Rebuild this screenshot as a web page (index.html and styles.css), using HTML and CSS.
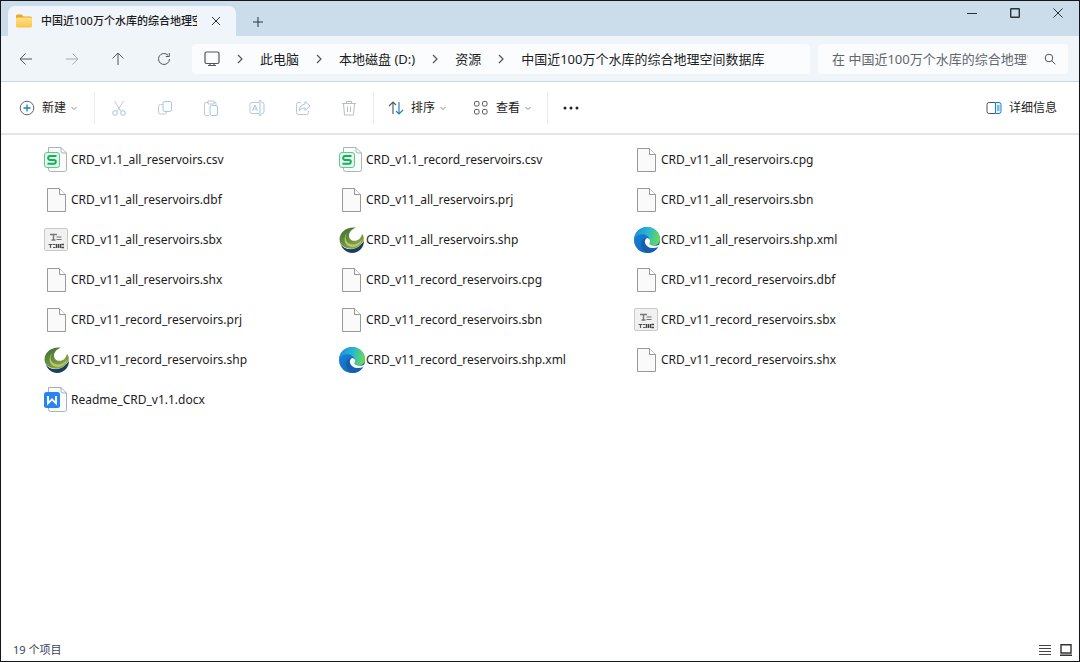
FILE: index.html
```html
<!DOCTYPE html>
<html lang="zh-CN">
<head>
<meta charset="utf-8">
<title>中国近100万个水库的综合地理空间数据库</title>
<link rel="stylesheet" href="styles.css">
</head>
<body>
<svg class="defs" aria-hidden="true">
  <defs>
    <linearGradient id="folder" x2="0" y2="1"><stop offset="0" stop-color="#ffe28a"/><stop offset="1" stop-color="#f8c544"/></linearGradient>
    <linearGradient id="globe-green" x2=".6" y2="1"><stop offset="0" stop-color="#3f6b35"/><stop offset=".5" stop-color="#5f8a3c"/><stop offset="1" stop-color="#8fa848"/></linearGradient>
    <linearGradient id="edge-top" x1="0" y1=".3" x2="1" y2=".5"><stop offset="0" stop-color="#1b8fdc"/><stop offset=".5" stop-color="#2bb5cf"/><stop offset="1" stop-color="#68dc55"/></linearGradient>
    <linearGradient id="edge-low" x2="1" y2="1"><stop offset="0" stop-color="#1787dc"/><stop offset="1" stop-color="#1160b4"/></linearGradient>
    <symbol id="i-file" viewBox="0 0 26 26"><path d="M3.500 1.500h12l6 6v17h-18z" fill="#fafafa" stroke="#999"/><path d="M15.500 1.500v6h6" fill="#fff" stroke="#999"/></symbol>
    <symbol id="i-csv" viewBox="0 0 26 26"><path d="M4.500.5H17l5.500 5.500v16.500a2 2 0 0 1-2 2h-14a2 2 0 0 1-2-2z" fill="#fafbfb" stroke="#adb5b4"/><path d="M17 .5V4a2 2 0 0 0 2 2h3.500" fill="none" stroke="#adb5b4"/><rect x=".5" y="5.500" width="15" height="15" rx="2.500" fill="#e5f8ec" stroke="#5bcb8a"/><path d="M12.500 9H6a1.800 1.800 0 0 0-1.800 1.800v.2A1.800 1.800 0 0 0 6 12.900h4a1.800 1.800 0 0 1 1.800 1.800v.3a1.800 1.800 0 0 1-1.800 1.800H3.500" fill="none" stroke="#18ad5b" stroke-width="2"/></symbol>
    <symbol id="i-doc" viewBox="0 0 26 26"><path d="M4.500.5H17l5.500 5.500v16.500a2 2 0 0 1-2 2h-14a2 2 0 0 1-2-2z" fill="#fafbfc" stroke="#a9afb8"/><path d="M17 .5V4a2 2 0 0 0 2 2h3.500" fill="none" stroke="#a9afb8"/><rect y="5" width="16" height="16" rx="2.500" fill="#2785f0"/><path d="M4 9v7.300l4-4 4 4V9" fill="none" stroke="#fff" stroke-width="1.900"/></symbol>
    <symbol id="i-sbx" viewBox="0 0 26 26"><rect x=".5" y="1.500" width="23" height="22" rx="1.500" fill="#f1f1f1" stroke="#cacaca"/><path d="M6 7.500h7M9.500 7.500V13M7.500 13h4" fill="none" stroke="#777" stroke-width="1.400"/><path d="M12.500 10h5M12.500 12.500h5" stroke="#777"/><path d="M4.500 17.500h4M6.500 17v4M9 17.500h2.500M9 20.500h2.500" stroke="#555" stroke-width="1.200"/><path d="M12.500 17v4M14.500 17v4M16.500 17v4M17.500 17.500h2.500M17.500 20.500h2.500" stroke="#444" stroke-width="1.400"/></symbol>
    <symbol id="i-shp" viewBox="0 0 26 26"><path d="M1.500 17C6 24 18 24 25 13c.5 7-5 13-12 13-5 0-9.500-3.500-11.500-9z" fill="#173f61"/><path d="M1.500 16.500C6 23.500 18 24 24.500 14" fill="none" stroke="#dfe9e6" stroke-width="1"/><path d="M17 .8C8-.5.500 5 .5 12.500.5 18 6 21.800 12.500 21.800 18 21.800 23 18 24.800 12c.1-2-.6-3.600-1.800-5C22 11 19.500 13.800 15.500 13.800 8 13.800 8 3.500 17 .8z" fill="url(#globe-green)"/><path d="M9 5C5.500 9 6 14 10 16.500c4.500 2.500 10.500.5 13.500-4.500-2 7-9 9.500-14 7C4.500 16.500 4.500 9 9 5z" fill="#b9c76c"/></symbol>
    <symbol id="i-edge" viewBox="0 0 26 26"><circle cx="13" cy="13" r="13" fill="url(#edge-low)"/><path d="M0 12C1 5 6 0 13 0c8 0 13 6 13 12 0 4.500-3.500 6.800-7 6.800-2.500 0-4.500-.8-4-2.300.8-1 1.200-2 .8-4C14 6 4 5 0 12z" fill="url(#edge-top)"/><path d="M10.500 11C5 14 6 25 14.500 26c4-.3 7.500-2.500 9.500-5.500-5 2.200-11 .5-12.500-4.500-.5-2 0-3.500 1-5z" fill="#1560ae"/><path d="M13.200 11c-2.800 1.300-3 4.700-.9 7.200 2.700 3.200 8 3.800 12.200 1.600l1.500-2.600c-2.800 1.800-6 1.800-8.500 1-2.200-.7-2.700-1.600-1.700-2.800.8-1.600.3-4-2.600-4.400z" fill="#fff"/></symbol>
    <symbol id="i-next" viewBox="0 0 8 10"><path d="m2 1 4 4-4 4" fill="none" stroke="#555" stroke-width="1.200"/></symbol>
    <symbol id="i-down" viewBox="0 0 8 8"><path d="m1.500 3 2.500 2.500L6.500 3" fill="none" stroke="#888"/></symbol>
  </defs>
</svg>
<div class="window">
  <header class="titlebar">
    <div class="tab">
      <svg class="icon16" viewBox="0 0 16 16"><g stroke="none"><path d="M0 3a1.500 1.500 0 0 1 1.500-1.500h4L7.500 3.500h7A1.500 1.500 0 0 1 16 5v6H0z" fill="#e9a820"/><rect y="4.500" width="16" height="10" rx="1.500" fill="url(#folder)"/></g></svg>
      <span class="tab-title">中国近100万个水库的综合地理空间数据库</span>
      <button class="tab-close" aria-label="关闭标签页"><svg class="icon10" viewBox="0 0 10 10"><path d="m1 1 8 8M9 1 1 9"/></svg></button>
    </div>
    <button class="tab-add" aria-label="新建标签页"><svg class="icon10" viewBox="0 0 10 10"><path d="M5 0v10M0 5h10"/></svg></button>
    <div class="window-controls">
      <button aria-label="最小化"><svg class="icon10" viewBox="0 0 10 10"><path d="M0 5.500h10"/></svg></button>
      <button aria-label="最大化"><svg class="icon10" viewBox="0 0 10 10"><rect x=".7" y=".7" width="8.600" height="8.600" rx=".5" stroke-width="1.400"/></svg></button>
      <button aria-label="关闭"><svg class="icon10" viewBox="0 0 10 10"><path d="m.5.5 9 9M9.500.5l-9 9"/></svg></button>
    </div>
  </header>

  <nav class="navbar" aria-label="导航">
    <div class="nav-buttons">
      <button aria-label="后退"><svg class="icon14" viewBox="0 0 14 14"><path d="M13 7H1.500M6.500 1.500 1 7l5.500 5.500"/></svg></button>
      <button aria-label="前进" disabled><svg class="icon14" viewBox="0 0 14 14"><path d="M1 7h11.500M7.500 1.500 13 7l-5.500 5.500"/></svg></button>
      <button aria-label="向上"><svg class="icon14" viewBox="0 0 14 14"><path d="M7 13V1.500M1.500 6.500 7 1l5.500 5.500"/></svg></button>
      <button aria-label="刷新"><svg class="icon14" viewBox="0 0 14 14"><path d="M12.500 7A5.500 5.500 0 1 1 11 3.200M12.300 1v3.500H8.800"/></svg></button>
    </div>
    <div class="address">
      <svg class="icon16 monitor" viewBox="0 0 16 16"><rect x="1" y="1" width="14" height="11.500" rx="1.500"/><path d="M4 14.500h8M6 12.500v2M10 12.500v2"/></svg>
      <svg class="next"><use href="#i-next"/></svg>
      <a href="#">此电脑</a>
      <svg class="next"><use href="#i-next"/></svg>
      <a href="#">本地磁盘 (D:)</a>
      <svg class="next"><use href="#i-next"/></svg>
      <a href="#">资源</a>
      <svg class="next"><use href="#i-next"/></svg>
      <a href="#">中国近100万个水库的综合地理空间数据库</a>
    </div>
    <form class="search">
      <input type="text" aria-label="搜索" placeholder="在 中国近100万个水库的综合地理空间数据库 中搜索">
      <button type="button" aria-label="搜索"><svg class="icon12" viewBox="0 0 12 12"><circle cx="5" cy="5" r="3.800"/><path d="m7.800 7.800 3.500 3.500"/></svg></button>
    </form>
  </nav>

  <div class="toolbar" role="toolbar" aria-label="命令栏">
    <button class="command new"><svg class="icon16" viewBox="0 0 16 16"><circle cx="8" cy="8" r="6.800" stroke="#5c6470"/><path d="M8 4.500v7M4.500 8h7" stroke="#1d7ec4" stroke-width="1.300"/></svg>新建<svg class="down"><use href="#i-down"/></svg></button>
    <div class="tools">
      <button disabled aria-label="剪切"><svg class="icon16" viewBox="0 0 16 16"><path d="M3.500 1 10 11.500M12.500 1 6 11.500" stroke="#c3c8cf"/><circle cx="4" cy="13" r="2.300"/><circle cx="12" cy="13" r="2.300"/></svg></button>
      <button disabled aria-label="复制"><svg class="icon16" viewBox="0 0 16 16"><rect x="6" y="1.500" width="8.500" height="10" rx="2"/><path d="M6 4.500H3.500a2 2 0 0 0-2 2v5.500a2 2 0 0 0 2 2h4a2 2 0 0 0 2-2v-.5" stroke="#c3c8cf"/></svg></button>
      <button disabled aria-label="粘贴"><svg class="icon16" viewBox="0 0 16 16"><path d="M5 2.500H3A1.500 1.500 0 0 0 1.500 4v10A1.500 1.500 0 0 0 3 15.500h3M11 2.500h2V5M5 1h6v3H5z" stroke="#c3c8cf"/><rect x="7" y="5.500" width="7.500" height="10" rx="1.500"/></svg></button>
      <button disabled aria-label="重命名"><svg class="icon16" viewBox="0 0 16 16"><path d="M10 2.500H3a2 2 0 0 0-2 2v7a2 2 0 0 0 2 2h7" stroke="#c3c8cf"/><path d="M12.500 2.500h.5a2 2 0 0 1 2 2v7a2 2 0 0 1-2 2h-.5M9.500.8h3M9.500 15.200h3M11 1v14M3.500 11 6 5l2.500 6M4.500 9h3"/></svg></button>
      <button disabled aria-label="共享"><svg class="icon16" viewBox="0 0 16 16"><path d="M6 2.500H3.500a2 2 0 0 0-2 2v8a2 2 0 0 0 2 2h8a2 2 0 0 0 2-2V11" stroke="#c3c8cf"/><path d="M10 1.500 15 6l-5 4.500V8C7.500 8 6 8.800 4.500 10.500 4.500 7 6.500 4.500 10 4z"/></svg></button>
      <button disabled aria-label="删除"><svg class="icon16" viewBox="0 0 16 16"><path d="M1 3.500h14M5.500 3V1.500h5V3M2.500 3.500l1 11.500h9l1-11.500M6.500 6.500v5.500M9.500 6.500v5.500" stroke="#b9bdc2"/></svg></button>
    </div>
    <button class="command sort"><svg class="icon16" viewBox="0 0 16 16"><path d="M5 14V2M1 6l4-4 3 3" stroke="#59616b" stroke-width="1.200"/><path d="M11 2v12M8 11l3 3 4-4" stroke="#2484c6" stroke-width="1.200"/></svg>排序<svg class="down"><use href="#i-down"/></svg></button>
    <button class="command view"><svg class="icon16" viewBox="0 0 16 16"><rect x="1.500" y="1.500" width="4.500" height="4.500" rx="1.300"/><rect x="9.500" y="1.500" width="4.500" height="4.500" rx="1.300"/><rect x="1.500" y="9.500" width="4.500" height="4.500" rx="1.300"/><rect x="9.500" y="9.500" width="4.500" height="4.500" rx="1.300"/></svg>查看<svg class="down"><use href="#i-down"/></svg></button>
    <button class="more" aria-label="查看更多"><svg class="icon16" viewBox="0 0 16 16"><g fill="#222" stroke="none"><circle cx="2" cy="8" r="1.500"/><circle cx="8" cy="8" r="1.500"/><circle cx="14" cy="8" r="1.500"/></g></svg></button>
    <button class="command details"><svg class="icon16" viewBox="0 0 16 16"><path d="M9.500 2.500H3a2 2 0 0 0-2 2v7a2 2 0 0 0 2 2h6.500"/><path d="M9.500 2.500H13a2 2 0 0 1 2 2v7a2 2 0 0 1-2 2H9.500zM11 6h2.500M11 8h2.500M11 10h2.500" fill="#dff2fd" stroke="#1b82c9"/></svg>详细信息</button>
  </div>

  <main class="content">
    <ul class="files">
      <li><svg><use href="#i-csv"/></svg>CRD_v1.1_all_reservoirs.csv</li>
      <li><svg><use href="#i-csv"/></svg>CRD_v1.1_record_reservoirs.csv</li>
      <li><svg><use href="#i-file"/></svg>CRD_v11_all_reservoirs.cpg</li>
      <li><svg><use href="#i-file"/></svg>CRD_v11_all_reservoirs.dbf</li>
      <li><svg><use href="#i-file"/></svg>CRD_v11_all_reservoirs.prj</li>
      <li><svg><use href="#i-file"/></svg>CRD_v11_all_reservoirs.sbn</li>
      <li><svg><use href="#i-sbx"/></svg>CRD_v11_all_reservoirs.sbx</li>
      <li><svg><use href="#i-shp"/></svg>CRD_v11_all_reservoirs.shp</li>
      <li><svg><use href="#i-edge"/></svg>CRD_v11_all_reservoirs.shp.xml</li>
      <li><svg><use href="#i-file"/></svg>CRD_v11_all_reservoirs.shx</li>
      <li><svg><use href="#i-file"/></svg>CRD_v11_record_reservoirs.cpg</li>
      <li><svg><use href="#i-file"/></svg>CRD_v11_record_reservoirs.dbf</li>
      <li><svg><use href="#i-file"/></svg>CRD_v11_record_reservoirs.prj</li>
      <li><svg><use href="#i-file"/></svg>CRD_v11_record_reservoirs.sbn</li>
      <li><svg><use href="#i-sbx"/></svg>CRD_v11_record_reservoirs.sbx</li>
      <li><svg><use href="#i-shp"/></svg>CRD_v11_record_reservoirs.shp</li>
      <li><svg><use href="#i-edge"/></svg>CRD_v11_record_reservoirs.shp.xml</li>
      <li><svg><use href="#i-file"/></svg>CRD_v11_record_reservoirs.shx</li>
      <li><svg><use href="#i-doc"/></svg>Readme_CRD_v1.1.docx</li>
    </ul>
  </main>

  <footer class="statusbar">
    <span>19 个项目</span>
    <div class="view-modes">
      <button aria-label="详细信息视图"><svg class="icon12" viewBox="0 0 12 12"><path d="M0 1.500h12M0 4.500h12M0 7.500h12M0 10.500h12" stroke="#444"/></svg></button>
      <button aria-label="大图标视图"><svg class="icon12" viewBox="0 0 12 12"><path d="M1 .7h10v8.300H1zM0 11.300h12" stroke="#333" stroke-width="1.400"/></svg></button>
    </div>
  </footer>
</div>
</body>
</html>
```
FILE: styles.css
```css
* { box-sizing: border-box; }

body {
  margin: 0;
  color: #1c1c1c;
  font: 12px/20px "Noto Sans", "Noto Sans CJK SC", sans-serif;
}

button {
  display: inline-flex;
  align-items: center;
  justify-content: center;
  padding: 0;
  border: 0;
  background: none;
  color: inherit;
  font: inherit;
}

svg {
  flex: none;
  fill: none;
  stroke: #50555c;
}

.defs { position: absolute; width: 0; height: 0; }
.icon10 { width: 10px; height: 10px; stroke: #2c3338; }
.icon12 { width: 12px; height: 12px; }
.icon14 { width: 14px; height: 14px; }
.icon16 { width: 16px; height: 16px; }

.window {
  display: flex;
  flex-direction: column;
  min-height: 100vh;
  border: 1px solid #15151c;
  background: #fff;
}

.titlebar {
  display: flex;
  height: 35px;
  padding-left: 7px;
  background: #cbdceb;
}

.tab {
  display: flex;
  align-items: center;
  width: 228px;
  margin-top: 5px;
  padding: 0 14px 0 8px;
  border-radius: 7px 7px 0 0;
  background: #f0f5fb;
}

.tab-title {
  flex: 1;
  overflow: hidden;
  margin: 0 13px 0 9px;
  font-size: 11px;
  font-weight: 500;
  white-space: nowrap;
}

.tab-close { width: 12px; height: 20px; }
.tab-add { width: 44px; margin-top: 6px; }

.window-controls { display: flex; margin-left: auto; }
.window-controls button { width: 43px; height: 24px; }

.navbar {
  display: flex;
  align-items: center;
  gap: 8px;
  height: 46px;
  padding: 0 11px 0 2px;
  border-bottom: 1px solid #ccd5df;
  background: #f0f5fa;
}

.nav-buttons { display: flex; width: 181px; }
.nav-buttons button { flex: none; width: 46px; height: 30px; }
.nav-buttons button:disabled { opacity: .45; }

.address {
  display: flex;
  flex: 1;
  align-items: center;
  gap: 16px;
  height: 30px;
  padding-left: 12px;
  border-radius: 4px;
  background: #fafcfe;
  font-size: 13px;
  white-space: nowrap;
}

.address a { color: inherit; text-decoration: none; }
.next { width: 8px; height: 10px; }
.monitor { stroke-width: 1.2px; }

.search {
  display: flex;
  align-items: center;
  width: 250px;
  height: 30px;
  padding: 0 10px 0 14px;
  border-radius: 4px;
  background: #fafcfe;
}

.search input {
  flex: 1;
  min-width: 0;
  padding: 0;
  border: 0;
  outline: 0;
  background: none;
  font: inherit;
  font-size: 13px;
}

.search input::placeholder { color: #62666b; }
.search button { width: 16px; margin-left: 14px; }

.toolbar {
  display: flex;
  align-items: center;
  height: 53px;
  padding: 0 22px 0 18px;
  border-bottom: 2px solid #e4e5e6;
}

.command { gap: 7px; height: 32px; }
.down { width: 8px; height: 8px; margin-left: -3px; }
.new { padding-right: 16px; }

.tools {
  display: flex;
  padding: 0 1px;
  border: solid #ececee;
  border-width: 0 1px;
}

.tools button { width: 46px; height: 32px; }
.tools svg { stroke: #9fc8e4; }
.sort { padding: 0 11px 0 14px; }
.view { padding: 0 15px; border-right: 1px solid #ececee; }
.more { width: 46px; height: 32px; }
.details { margin-left: auto; }

.content { flex: 1; padding: 5px 0 0 43px; }

.files {
  display: grid;
  grid-template-columns: repeat(auto-fill, 295px);
  margin: 0;
  padding: 0;
  list-style: none;
}

.files li {
  display: flex;
  align-items: center;
  gap: 1px;
  height: 40px;
}

.files svg { width: 26px; height: 26px; stroke: none; }

.statusbar {
  display: flex;
  align-items: center;
  justify-content: space-between;
  height: 22px;
  padding: 0 7px 0 12px;
  color: #34435c;
  font-size: 11px;
}

.view-modes { display: flex; gap: 9px; }
.view-modes button { width: 12px; height: 20px; }
```
